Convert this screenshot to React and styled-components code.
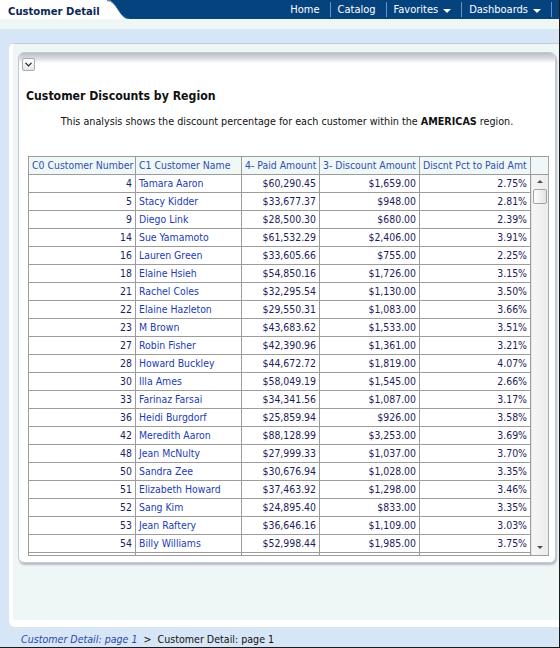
import React from "react";
import styled, { createGlobalStyle } from "styled-components";

const GlobalStyle = createGlobalStyle`
  html, body { margin: 0; padding: 0; }
  body { font-family: "DejaVu Sans Condensed", "DejaVu Sans", sans-serif; font-stretch: condensed; }
  * { box-sizing: border-box; }
`;

const FONT = `"DejaVu Sans Condensed", "DejaVu Sans", sans-serif`;

const Frame = styled.div`
  width: 560px;
  height: 648px;
  background: #d6e6f6;
  border-right: 1px solid #1a1a1a;
  border-bottom: 1px solid #1a1a1a;
  display: flex;
  flex-direction: column;
  font-family: ${FONT};
  font-stretch: condensed;
`;

const TopBar = styled.div`
  height: 19px;
  display: flex;
  background: #05437f;
  flex-shrink: 0;
`;

const Tab = styled.div`
  width: 107px;
  background: #ffffff;
  color: #0c2856;
  font-weight: bold;
  font-size: 11.2px;
  line-height: 19px;
  padding-left: 8px;
  padding-top: 2px;
  white-space: nowrap;
`;

const Curve = styled.svg`
  width: 24px;
  height: 19px;
  display: block;
  background: #ffffff;
`;

const Nav = styled.nav`
  flex: 1;
  display: flex;
  justify-content: flex-end;
  align-items: stretch;
  padding: 2px 7px 2px 0;
`;

const NavItem = styled.div`
  color: #ffffff;
  font-size: 11px;
  display: flex;
  align-items: center;
  gap: 5px;
  padding: 0 10px 0 7px;
  border-right: 1px solid #6f93bf;
  white-space: nowrap;
`;

const Caret = styled.span`
  width: 0;
  height: 0;
  border-left: 4px solid transparent;
  border-right: 4px solid transparent;
  border-top: 4px solid #ffffff;
  margin-top: 2px;
`;

const PaleStrip = styled.div`
  height: 10px;
  background: #eef7f5;
  flex-shrink: 0;
`;

const Body = styled.div`
  flex: 1;
  display: flex;
  flex-direction: column;
  padding-top: 14px;
`;

const Content = styled.div`
  flex: 1;
  margin-left: 9px;
  background: #eef6f6;
  border-top: 1px solid #c3c9de;
  border-left: 4px solid #ffffff;
  border-bottom: 7px solid #ffffff;
  border-radius: 6px 0 0 6px;
  padding: 8px 3px 0 5px;
`;

const Panel = styled.div`
  height: 511px;
  background: #ffffff;
  border: 1px solid #c4c8d0;
  border-radius: 6px;
  box-shadow: 1px 2px 2px #b8bcc4;
  position: relative;
  overflow: hidden;
`;

const PanelHead = styled.div`
  height: 10px;
  background: linear-gradient(#b9bdc5, #dde0e4 60%, #ffffff);
`;

const Collapse = styled.button`
  position: absolute;
  left: 3px;
  top: 5px;
  width: 13px;
  height: 13px;
  padding: 0;
  border: 1px solid #a6aab2;
  border-radius: 2px;
  background: linear-gradient(#ffffff, #e4e6ea);
  display: flex;
  align-items: center;
  justify-content: center;
`;

const PanelBody = styled.div`
  padding: 24px 7px 0 7px;
`;

const Title = styled.h2`
  margin: 0;
  font-family: ${FONT};
  font-stretch: condensed;
  font-size: 12.2px;
  font-weight: bold;
  color: #111111;
  line-height: 18px;
`;

const Desc = styled.p`
  margin: 9px 0 0;
  text-align: center;
  font-size: 10.7px;
  color: #111111;
  line-height: 16px;
`;

const TableBox = styled.div`
  margin: 26px 0 0 2px;
  width: 521px;
  display: flex;
  border: 1px solid #9c9c9c;
  border-right: 1px solid #a8a8a8;
`;

const TableMain = styled.div`
  width: 502px;
`;

const Row = styled.div`
  display: grid;
  grid-template-columns: 107px 106px 78px 100px 111px;
  height: 18px;
  background: ${(p) => (p.$head ? "#f0f7f7" : "#ffffff")};
  border-bottom: 1px solid #9c9c9c;
`;

const Cell = styled.div`
  font-size: 10.4px;
  line-height: 17px;
  padding: 0 3px;
  white-space: nowrap;
  overflow: hidden;
  text-align: ${(p) => (p.$right ? "right" : "left")};
  color: ${(p) => p.$color || "#1c1c5c"};
  border-right: 1px solid #9c9c9c;
`;

const Viewport = styled.div`
  height: 380px;
  overflow: hidden;
`;

const ScrollCol = styled.div`
  width: 18px;
  display: flex;
  flex-direction: column;
`;

const ScrollHead = styled.div`
  height: 18px;
  background: #f0f7f7;
  border-bottom: 1px solid #9c9c9c;
`;

const Track = styled.div`
  flex: 1;
  background: linear-gradient(90deg, #f6f6f6, #ececec);
  border-left: 1px solid #e4e4e4;
  display: flex;
  flex-direction: column;
  align-items: center;
  padding-top: 5px;
`;

const Arrow = styled.span`
  width: 0;
  height: 0;
  border-left: 3px solid transparent;
  border-right: 3px solid transparent;
  ${(p) => (p.$down ? "border-top: 3px solid #505050;" : "border-bottom: 3px solid #505050;")}
  ${(p) => (p.$down ? "margin-top: auto; margin-bottom: 6px;" : "")}
`;

const Thumb = styled.div`
  margin-top: 6px;
  width: 14px;
  height: 15px;
  border: 1px solid #a4a4a4;
  border-radius: 2px;
  background: linear-gradient(90deg, #ffffff, #e2e2e2);
`;

const Footer = styled.div`
  height: 20px;
  flex-shrink: 0;
  display: flex;
  align-items: center;
  padding-left: 21px;
  padding-top: 3px;
  font-size: 10.6px;
  color: #111111;
  gap: 6px;
`;

const Crumb = styled.span`
  font-style: italic;
  color: #2a47a8;
`;

const rows = [
  [4, "Tamara Aaron", "$60,290.45", "$1,659.00", "2.75%"],
  [5, "Stacy Kidder", "$33,677.37", "$948.00", "2.81%"],
  [9, "Diego Link", "$28,500.30", "$680.00", "2.39%"],
  [14, "Sue Yamamoto", "$61,532.29", "$2,406.00", "3.91%"],
  [16, "Lauren Green", "$33,605.66", "$755.00", "2.25%"],
  [18, "Elaine Hsieh", "$54,850.16", "$1,726.00", "3.15%"],
  [21, "Rachel Coles", "$32,295.54", "$1,130.00", "3.50%"],
  [22, "Elaine Hazleton", "$29,550.31", "$1,083.00", "3.66%"],
  [23, "M Brown", "$43,683.62", "$1,533.00", "3.51%"],
  [27, "Robin Fisher", "$42,390.96", "$1,361.00", "3.21%"],
  [28, "Howard Buckley", "$44,672.72", "$1,819.00", "4.07%"],
  [30, "Illa Ames", "$58,049.19", "$1,545.00", "2.66%"],
  [33, "Farinaz Farsai", "$34,341.56", "$1,087.00", "3.17%"],
  [36, "Heidi Burgdorf", "$25,859.94", "$926.00", "3.58%"],
  [42, "Meredith Aaron", "$88,128.99", "$3,253.00", "3.69%"],
  [48, "Jean McNulty", "$27,999.33", "$1,037.00", "3.70%"],
  [50, "Sandra Zee", "$30,676.94", "$1,028.00", "3.35%"],
  [51, "Elizabeth Howard", "$37,463.92", "$1,298.00", "3.46%"],
  [52, "Sang Kim", "$24,895.40", "$833.00", "3.35%"],
  [53, "Jean Raftery", "$36,646.16", "$1,109.00", "3.03%"],
  [54, "Billy Williams", "$52,998.44", "$1,985.00", "3.75%"],
  ["", "", "", "", ""],
];

const HEAD = "#2e4fae";

export default function App() {
  return (
    <>
      <GlobalStyle />
      <Frame>
        <TopBar>
          <Tab>Customer Detail</Tab>
          <Curve viewBox="0 0 24 19">
            <path d="M0,0 C10,0 12,19 22,19 L24,19 L24,0 Z" fill="#05437f" />
            <path d="M0,0.5 C10,0.5 12,18.5 22,18.5" fill="none" stroke="#3d6ea6" strokeWidth="1" />
          </Curve>
          <Nav>
            <NavItem>Home</NavItem>
            <NavItem>Catalog</NavItem>
            <NavItem>Favorites <Caret /></NavItem>
            <NavItem>Dashboards <Caret /></NavItem>
          </Nav>
        </TopBar>
        <PaleStrip />
        <Body>
          <Content>
            <Panel>
              <PanelHead />
              <Collapse aria-label="collapse">
                <svg width="7" height="5" viewBox="0 0 7 5">
                  <path d="M0.5,0.8 L3.5,3.8 L6.5,0.8" fill="none" stroke="#222" strokeWidth="1.2" />
                </svg>
              </Collapse>
              <PanelBody>
                <Title>Customer Discounts by Region</Title>
                <Desc>
                  This analysis shows the discount percentage for each customer within the <b>AMERICAS</b> region.
                </Desc>
                <TableBox>
                  <TableMain>
                    <Row $head>
                      <Cell $color={HEAD}>C0 Customer Number</Cell>
                      <Cell $color={HEAD}>C1 Customer Name</Cell>
                      <Cell $color={HEAD}>4- Paid Amount</Cell>
                      <Cell $color={HEAD}>3- Discount Amount</Cell>
                      <Cell $color={HEAD}>Discnt Pct to Paid Amt</Cell>
                    </Row>
                    <Viewport>
                      {rows.map((r, i) => (
                        <Row key={i}>
                          <Cell $right>{r[0]}</Cell>
                          <Cell $color="#1b3bb4">{r[1]}</Cell>
                          <Cell $right>{r[2]}</Cell>
                          <Cell $right>{r[3]}</Cell>
                          <Cell $right>{r[4]}</Cell>
                        </Row>
                      ))}
                    </Viewport>
                  </TableMain>
                  <ScrollCol>
                    <ScrollHead />
                    <Track>
                      <Arrow />
                      <Thumb />
                      <Arrow $down />
                    </Track>
                  </ScrollCol>
                </TableBox>
              </PanelBody>
            </Panel>
          </Content>
        </Body>
        <Footer>
          <Crumb>Customer Detail: page 1</Crumb>
          <span>&gt;</span>
          <span>Customer Detail: page 1</span>
        </Footer>
      </Frame>
    </>
  );
}
